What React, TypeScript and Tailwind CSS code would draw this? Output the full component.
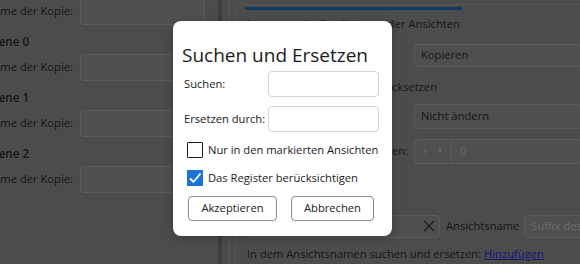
import React from "react";

const dimText = "text-[#161616]";

function LeftGroup({ title }: { title: string }) {
  return (
    <>
      <div className="h-[29px] flex items-center pt-[4px] ml-[-15px] font-semibold text-[11.6px] text-[#161616] whitespace-nowrap">
        {title}
      </div>
      <InputRow />
    </>
  );
}

function InputRow() {
  return (
    <div className="h-[27px] flex items-center">
      <div className="w-[80px] flex justify-end pr-[7px] text-[11.2px] text-[#161616] whitespace-nowrap">
        Name der Kopie:
      </div>
      <div className="w-[125px] h-[27px] rounded-[4px] border border-[#5b5b5b] bg-[#4f4f4f]" />
    </div>
  );
}

export default function App() {
  return (
    <div
      className="relative w-[580px] h-[264px] overflow-hidden bg-[#4c4c4c]"
      style={{ fontFamily: '"Open Sans", "Noto Sans", sans-serif' }}
    >
      <div className="flex h-full">
        {/* left panel */}
        <div className="w-[206px] shrink-0 flex flex-col mt-[-2px]">
          <InputRow />
          <LeftGroup title="Ebene 0" />
          <LeftGroup title="Ebene 1" />
          <LeftGroup title="Ebene 2" />
        </div>
        {/* scrollbar area */}
        <div className="w-[23px] shrink-0 flex">
          <div className="ml-[12px] w-[4px] h-full bg-[#3c3c3c]" />
        </div>
        {/* right panel */}
        <div className="flex-1 border-l border-[#575757] pl-[5px] pt-[4px]">
          <div className="h-full rounded-tl-[6px] border-l border-t border-[#575757] pl-[9px] pt-[2px] flex flex-col">
            <div className="w-[217px] h-[3px] bg-[#133a60]" />
            <div className={`mt-[6px] h-[18px] flex items-center text-[11.2px] ${dimText} whitespace-nowrap`}>
              Anpassen des Duplizierens der Ansichten
            </div>
            <div className="mt-[10px] h-[24px] flex">
              <div className="w-[169px]" />
              <div className={`flex-1 rounded-[4px] border border-[#5b5b5b] bg-[#4f4f4f] flex items-center pl-[6px] text-[11.2px] ${dimText}`}>
                Kopieren
              </div>
            </div>
            <div className={`mt-[10px] h-[20px] w-[192px] flex items-center justify-end text-[11.2px] ${dimText} whitespace-nowrap`}>
              Zurücksetzen
            </div>
            <div className="mt-[7px] h-[25px] flex">
              <div className="w-[169px]" />
              <div className={`flex-1 rounded-[4px] border border-[#5b5b5b] bg-[#4f4f4f] flex items-center pl-[6px] text-[11.2px] ${dimText}`}>
                Nicht ändern
              </div>
            </div>
            <div className="mt-[10px] h-[25px] flex">
              <div className={`w-[169px] flex items-center justify-end pr-[6px] text-[11.2px] ${dimText} whitespace-nowrap`}>
                Ebenen:
              </div>
              <div className="flex-1 rounded-[4px] border border-[#5b5b5b] bg-[#4f4f4f] flex items-center text-[11.2px] text-[#6a6a6a]">
                <div className="w-[37px] h-full flex items-center border-r border-[#5b5b5b] pl-[7px] gap-[8px]">
                  <span>+</span>
                  <span className="text-[7px]">▼</span>
                </div>
                <span className="pl-[8px]">0</span>
              </div>
            </div>
            <div className="mt-[51px] h-[24px] flex items-center">
              <div className="ml-[2px] w-[193px] shrink-0 h-full rounded-[4px] border border-[#5b5b5b] bg-[#4f4f4f] flex items-center justify-end pr-[4px]">
                <svg width="12" height="12" viewBox="0 0 12 12" className="text-[#1c1c1c]">
                  <path d="M1 1 L11 11 M11 1 L1 11" stroke="currentColor" strokeWidth="1.2" />
                </svg>
              </div>
              <span className={`ml-[6px] text-[11.2px] ${dimText}`}>Ansichtsname</span>
              <div className="ml-[5px] flex-1 h-full rounded-l-[4px] border border-r-0 border-[#5b5b5b] bg-[#4f4f4f] flex items-center pl-[6px] text-[11.2px] text-[#6c6c6c] whitespace-nowrap overflow-hidden">
                Suffix des
              </div>
            </div>
            <div className={`mt-[6px] ml-[2px] h-[20px] flex items-center text-[11.2px] ${dimText} whitespace-nowrap`}>
              In dem Ansichtsnamen suchen und ersetzen:&nbsp;
              <span className="underline text-[#15157a]">Hinzufügen</span>
            </div>
          </div>
        </div>
      </div>

      {/* dialog */}
      <div className="absolute left-[173px] top-[21px] w-[219px] h-[215px] bg-white rounded-[8px] shadow-[0_2px_8px_rgba(0,0,0,0.25)] pl-[9px] pr-[13px] pt-[20px]">
        <div className="text-[19px] leading-[28px] text-[#1b1b1b] whitespace-nowrap">Suchen und Ersetzen</div>
        <div className="mt-[2px] flex items-center h-[26px]">
          <span className="w-[86px] shrink-0 pl-[2px] text-[11.2px] text-[#1b1b1b]">Suchen:</span>
          <div className="flex-1 h-[26px] rounded-[4px] border border-[#d5d5d5]" />
        </div>
        <div className="mt-[9px] flex items-center h-[26px]">
          <span className="w-[86px] shrink-0 pl-[2px] text-[11.2px] text-[#1b1b1b] whitespace-nowrap">Ersetzen durch:</span>
          <div className="flex-1 h-[26px] rounded-[4px] border border-[#d5d5d5]" />
        </div>
        <div className="mt-[10px] flex items-center h-[16px] pl-[5px]">
          <div className="w-[16px] h-[16px] shrink-0 border border-[#1b1b1b] rounded-[1px]" />
          <span className="ml-[5px] text-[11.2px] text-[#1b1b1b] whitespace-nowrap">Nur in den markierten Ansichten</span>
        </div>
        <div className="mt-[12px] flex items-center h-[16px] pl-[5px]">
          <div className="w-[16px] h-[16px] shrink-0 bg-[#1a74d6] flex items-center justify-center">
            <svg width="14" height="14" viewBox="0 0 14 14">
              <path d="M2 7.5 L5.5 11 L12.5 2.5" fill="none" stroke="white" strokeWidth="1.8" />
            </svg>
          </div>
          <span className="ml-[5px] text-[11.2px] text-[#1b1b1b] whitespace-nowrap">Das Register berücksichtigen</span>
        </div>
        <div className="mt-[10px] flex h-[25px] pl-[6px] gap-[14px]">
          <div className="w-[89px] rounded-[4px] border border-[#8a8a8a] flex items-center justify-center text-[11.2px] text-[#1b1b1b]">
            Akzeptieren
          </div>
          <div className="w-[83px] rounded-[4px] border border-[#8a8a8a] flex items-center justify-center text-[11.2px] text-[#1b1b1b]">
            Abbrechen
          </div>
        </div>
      </div>
    </div>
  );
}
